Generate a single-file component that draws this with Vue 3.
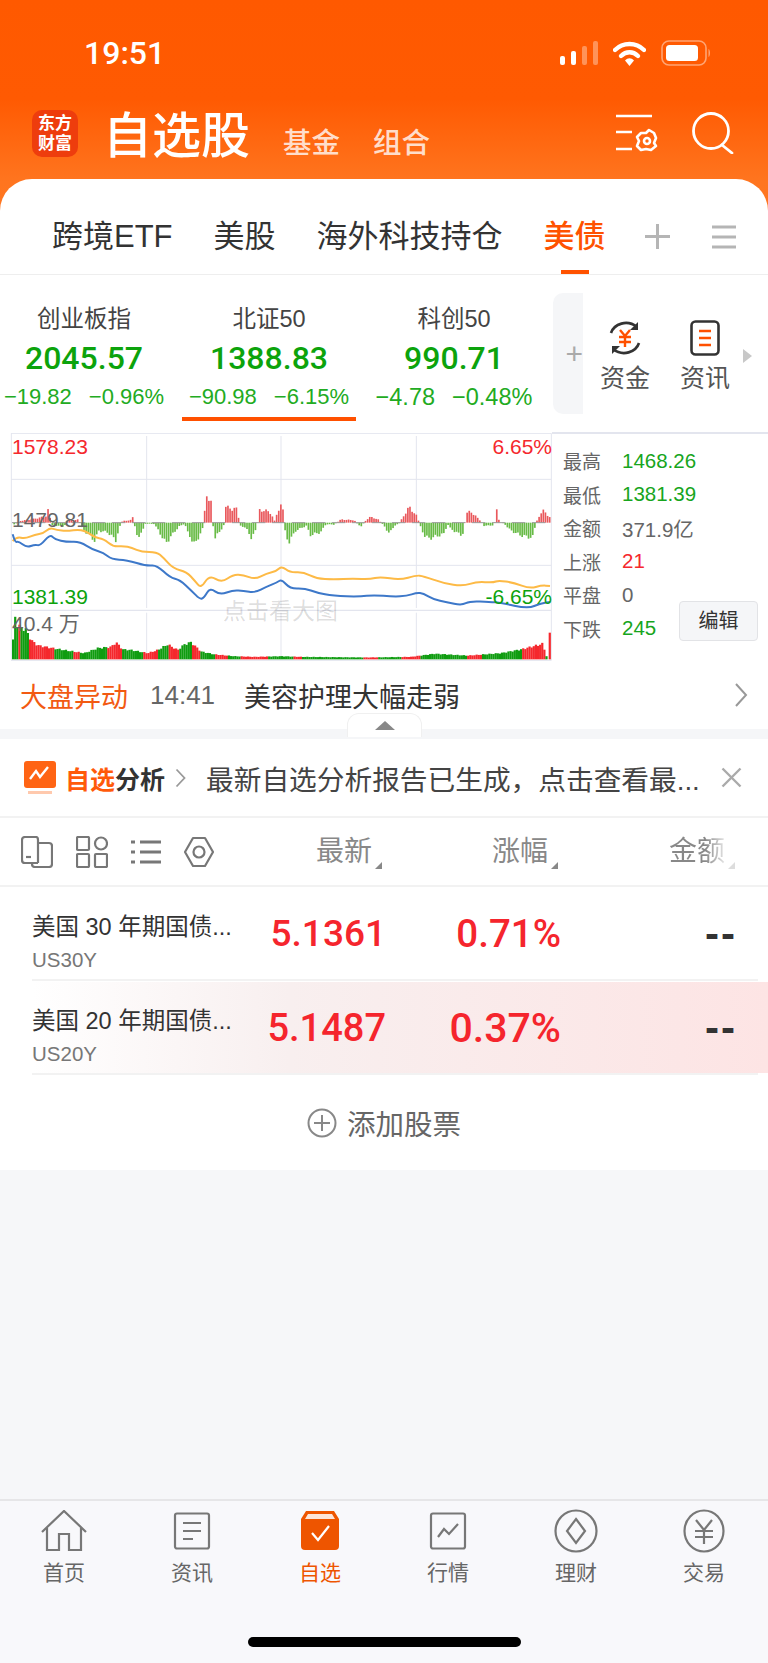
<script setup>
const tabs = ['跨境ETF', '美股', '海外科技持仓', '美债']

const indexes = [
  { name: '创业板指', value: '2045.57', diff: '−19.82', pct: '−0.96%' },
  { name: '北证50', value: '1388.83', diff: '−90.98', pct: '−6.15%', active: true },
  { name: '科创50', value: '990.71', diff: '−4.78', pct: '−0.48%' }
]

const stats = [
  { label: '最高', value: '1468.26', tone: 'green' },
  { label: '最低', value: '1381.39', tone: 'green' },
  { label: '金额', value: '371.9亿', tone: 'gray' },
  { label: '上涨', value: '21', tone: 'red' },
  { label: '平盘', value: '0', tone: 'gray' },
  { label: '下跌', value: '245', tone: 'green' }
]

const stocks = [
  { name: '美国 30 年期国债...', code: 'US30Y', price: '5.1361', pct: '0.71%' },
  { name: '美国 20 年期国债...', code: 'US20Y', price: '5.1487', pct: '0.37%', hot: true }
]

const navItems = [
  { key: 'home', label: '首页' },
  { key: 'news', label: '资讯' },
  { key: 'watch', label: '自选', active: true },
  { key: 'market', label: '行情' },
  { key: 'wealth', label: '理财' },
  { key: 'trade', label: '交易' }
]

// all chart numbers are in 3x units, the svg viewBox scales them back down
const yellow = [38,345,50,332,75,338,105,326,130,322,150,305,170,312,200,315,240,310,265,320,285,335,310,338,340,362,370,360,395,365,425,378,470,378,490,395,520,428,560,438,585,465,603,487,628,447,665,470,700,445,730,447,765,460,800,442,830,435,845,420,870,440,910,438,950,458,1000,460,1060,458,1110,460,1140,452,1200,462,1248,448,1270,450,1330,472,1390,480,1430,467,1480,470,1495,463,1540,470,1590,488,1625,478,1650,480]
const blue = [38,325,45,350,55,345,80,365,105,355,120,360,150,325,165,340,200,348,240,347,280,372,310,380,335,400,380,402,440,420,470,417,510,455,540,462,575,495,600,520,612,515,630,485,660,507,700,492,730,495,765,500,800,482,830,470,845,460,870,488,915,487,950,500,1000,510,1080,512,1120,507,1180,512,1220,510,1250,500,1270,502,1300,520,1340,528,1385,538,1410,525,1470,528,1500,530,1585,548,1620,532,1650,528]

// smooth through midpoints so the lines don't look jagged
const toPath = (arr) => {
  let d = 'M' + arr[0] + ' ' + arr[1]
  for (let i = 2; i < arr.length - 2; i += 2) {
    const mx = (arr[i] + arr[i + 2]) / 2
    const my = (arr[i + 1] + arr[i + 3]) / 2
    d += ' Q' + arr[i] + ' ' + arr[i + 1] + ' ' + mx + ' ' + my
  }
  return d + ' L' + arr[arr.length - 2] + ' ' + arr[arr.length - 1]
}
const yellowLine = toPath(yellow)
const blueLine = toPath(blue)

const lerp = (keys, x) => {
  for (let i = 0; i < keys.length - 2; i += 2) {
    if (x >= keys[i] && x <= keys[i + 2]) {
      const t = (x - keys[i]) / ((keys[i + 2] - keys[i]) || 1)
      return keys[i + 1] + (keys[i + 3] - keys[i + 1]) * t
    }
  }
  return 0
}

// signed height of the big order bars, + goes up
const flowKeys = [40,-6,60,6,100,12,135,20,145,48,150,-8,190,-12,200,8,235,10,240,-12,255,-30,285,-60,290,-25,320,-30,345,-55,360,-3,365,5,390,8,395,20,400,-5,410,-45,425,-30,432,-3,460,-4,470,-20,495,-65,520,-30,535,-12,552,-3,560,-30,582,-70,605,-20,610,-3,613,75,632,75,636,-3,642,-50,665,-15,672,-2,675,55,690,40,705,50,715,8,718,-10,735,-15,750,-48,765,-25,770,-3,773,40,806,36,822,4,828,30,845,60,850,-5,855,-45,865,-60,885,-25,920,-8,925,-40,960,-30,975,-5,1000,-6,1020,10,1060,8,1080,-15,1085,-5,1105,18,1130,12,1150,-10,1165,-35,1180,-10,1195,-3,1205,15,1225,50,1250,18,1255,-2,1270,-40,1285,-50,1330,-35,1340,-3,1345,-15,1365,-30,1385,-40,1392,-5,1395,30,1410,35,1440,5,1450,-10,1480,-8,1488,45,1495,3,1510,-3,1530,-25,1560,-40,1595,-48,1605,-3,1610,10,1625,40,1652,12]
const flowBars = []
for (let x = 40; x < 1652; x += 6.35) {
  const v = lerp(flowKeys, x) * (0.95 + 0.12 * Math.sin(x * 1.7))
  if (Math.abs(v) < 1) continue
  flowBars.push({ x, y: v > 0 ? 290 - v : 290, h: Math.abs(v), fill: v > 0 ? '#e9585c' : '#68bb46' })
}

const volKeys = [36,60,42,140,46,110,75,95,90,62,110,45,160,35,200,28,250,20,290,36,330,40,345,55,365,32,390,30,440,20,470,30,500,48,530,30,550,48,570,55,600,25,640,16,700,10,760,8,840,10,900,8,1100,6,1230,8,1300,18,1400,12,1500,20,1560,32,1625,50,1638,4,1652,4]
const redRanges = [[52,58],[82,160],[220,235],[320,365],[428,470],[505,535],[572,600],[640,680],[720,800],[880,900],[1090,1130],[1200,1260],[1400,1440],[1560,1632]]
const volBars = []
for (let x = 36; x < 1640; x += 6.35) {
  const h = lerp(volKeys, x) * (0.93 + 0.07 * Math.sin(x * 2.3))
  const up = redRanges.some(([a, b]) => x >= a && x <= b)
  volBars.push({ x, y: 700 - h, h, fill: up ? '#f5282d' : '#0f9c10' })
}
volBars.push({ x: 1646, y: 620, h: 80, fill: '#f5282d' })
</script>

<template>
  <div class="page">
    <div class="top">
      <div class="statusbar">
        <span class="time">19:51</span>
        <div class="status-icons">
          <svg width="38" height="24" viewBox="0 0 38 24">
            <rect x="0" y="15" width="5" height="9" rx="2" fill="#fff" />
            <rect x="11" y="10" width="5" height="14" rx="2" fill="#fff" />
            <rect x="22" y="5" width="5" height="19" rx="2" fill="#fff" opacity=".35" />
            <rect x="33" y="0" width="5" height="24" rx="2" fill="#fff" opacity=".35" />
          </svg>
          <svg width="33" height="25" viewBox="0 0 33 25">
            <path d="M2 9 C10 1 23 1 31 9" fill="none" stroke="#fff" stroke-width="4.4" stroke-linecap="round" />
            <path d="M8 15 C13 10 20 10 25 15" fill="none" stroke="#fff" stroke-width="4.4" stroke-linecap="round" />
            <path d="M12 19.5 C15 16.5 18 16.5 21 19.5 L16.5 25 Z" fill="#fff" />
          </svg>
          <svg width="50" height="26" viewBox="0 0 50 26">
            <rect x="1" y="1" width="44" height="24" rx="7" fill="none" stroke="#fff" stroke-opacity=".45" stroke-width="1.6" />
            <rect x="5" y="5" width="32" height="16" rx="3.5" fill="#fff" />
            <path d="M47.5 9 C49.5 10 49.5 16 47.5 17 Z" fill="#fff" opacity=".45" />
          </svg>
        </div>
      </div>

      <div class="titlebar">
        <div class="logo"><span>东方</span><span>财富</span></div>
        <span class="title">自选股</span>
        <span class="subtitle">基金</span>
        <span class="subtitle">组合</span>
        <div class="title-icons">
          <svg width="44" height="42" viewBox="0 0 44 42" fill="none" stroke="#fff" stroke-width="2.6">
            <path d="M1 4 H37 M1 20 H17 M1 37 H17" />
            <path d="M26 21 L31 21 L34 18 L39 21 L41 26 L39 31 L41 34 L36 38 L31 37 L26 38 L22 34 L24 29 L22 25 Z" stroke-linejoin="round" />
            <circle cx="32" cy="29" r="3" />
          </svg>
          <svg width="42" height="42" viewBox="0 0 42 42" fill="none" stroke="#fff" stroke-width="2.8">
            <circle cx="19" cy="19" r="17.5" />
            <path d="M30 33 L40 41" stroke-linecap="round" />
          </svg>
        </div>
      </div>

      <div class="tabs">
        <span v-for="(t, i) in tabs" :key="t" class="tab" :class="{ on: i === 3 }">{{ t }}</span>
        <svg class="tab-plus" width="27" height="27" viewBox="0 0 27 27">
          <path d="M13.5 1 V26 M1 13.5 H26" stroke="#b5b5b5" stroke-width="3" />
        </svg>
        <svg class="tab-menu" width="24" height="24" viewBox="0 0 24 24">
          <path d="M0 2 H24 M0 12 H24 M0 22 H24" stroke="#b5b5b5" stroke-width="3" />
        </svg>
      </div>
    </div>

    <div class="index-row">
      <div class="index-list">
        <div v-for="item in indexes" :key="item.name" class="index-card" :class="{ on: item.active }">
          <div class="index-name">{{ item.name }}</div>
          <div class="index-value">{{ item.value }}</div>
          <div class="index-change"><span>{{ item.diff }}</span><span>{{ item.pct }}</span></div>
        </div>
      </div>
      <div class="index-add">+</div>
      <div class="shortcut">
        <svg width="36" height="36" viewBox="0 0 36 36" fill="none">
          <path d="M4 13 C7 4 20 -1 30 7 M32 23 C29 32 16 37 6 29" stroke="#333" stroke-width="2.6" />
          <path d="M31 2 V10 H23 M5 34 V26 H13" fill="#333" stroke="none" />
          <path d="M13 10 L18 16 L23 10 M12 17 H24 M12 22 H24 M18 16 V27" stroke="#ff5000" stroke-width="2.4" />
        </svg>
        <span>资金</span>
      </div>
      <div class="shortcut">
        <svg width="30" height="36" viewBox="0 0 30 36" fill="none">
          <rect x="1.5" y="1.5" width="27" height="33" rx="4" stroke="#333" stroke-width="2.6" />
          <path d="M9 11 H21 M9 18 H21 M9 25 H21" stroke="#ff5000" stroke-width="2.6" />
        </svg>
        <span>资讯</span>
      </div>
      <div class="more-arrow"></div>
    </div>

    <div class="chart-row">
      <div class="chart">
        <svg class="chart-svg" width="542" height="228" viewBox="30 21 1626 684">
          <g stroke="#e3e5ee" stroke-width="3" fill="none">
            <path d="M33 22 H1654 M33 160 H1654 M33 418 H1654 M33 703 H1654" />
            <path d="M33 553 H1654" stroke-width="4" />
            <path d="M34 22 V703 M1654 22 V703" />
            <path d="M440 30 V546 M440 560 V700 M843 30 V546 M843 560 V700 M1249 30 V546 M1249 560 V700" />
          </g>
          <rect v-for="(b, i) in flowBars" :key="'f' + i" :x="b.x" :y="b.y" width="5" :height="b.h" :fill="b.fill" />
          <path d="M36 290 H1654" stroke="#9a9a9a" stroke-width="3" stroke-dasharray="40 20" />
          <path :d="yellowLine" fill="none" stroke="#fdba46" stroke-width="6" stroke-linejoin="round" />
          <path :d="blueLine" fill="none" stroke="#3d78c9" stroke-width="6" stroke-linejoin="round" />
          <rect v-for="(b, i) in volBars" :key="'v' + i" :x="b.x" :y="b.y" width="6.6" :height="b.h" :fill="b.fill" />
        </svg>
        <span class="chart-label high">1578.23</span>
        <span class="chart-label high-pct">6.65%</span>
        <span class="chart-label mid">1479.81</span>
        <span class="chart-label low">1381.39</span>
        <span class="chart-label low-pct">-6.65%</span>
        <span class="chart-label vol">40.4 万</span>
        <span class="chart-hint">点击看大图</span>
      </div>
      <div class="stats">
        <div v-for="s in stats" :key="s.label" class="stat">
          <span class="stat-label">{{ s.label }}</span>
          <span class="stat-value" :class="s.tone">{{ s.value }}</span>
        </div>
        <div class="edit-btn">编辑</div>
      </div>
    </div>

    <div class="alert-row">
      <span class="alert-tag">大盘异动</span>
      <span class="alert-time">14:41</span>
      <span class="alert-text">美容护理大幅走弱</span>
      <svg class="alert-arrow" width="14" height="26" viewBox="0 0 14 26">
        <path d="M2 2 L12 13 L2 24" fill="none" stroke="#999" stroke-width="2" />
      </svg>
    </div>

    <div class="band">
      <div class="collapse"><i></i></div>
    </div>

    <div class="analysis">
      <svg width="32" height="34" viewBox="0 0 32 34">
        <rect x="0" y="0" width="32" height="27" rx="3" fill="#ff6414" />
        <path d="M6 18 L12 10 L16 16 L24 6" fill="none" stroke="#fff" stroke-width="2.4" />
        <rect x="4" y="30" width="24" height="3" fill="#ffc9ad" />
      </svg>
      <span class="analysis-name"><em>自选</em>分析</span>
      <svg width="11" height="20" viewBox="0 0 11 20">
        <path d="M1.5 1.5 L9.5 10 L1.5 18.5" fill="none" stroke="#999" stroke-width="1.8" />
      </svg>
      <span class="analysis-text">最新自选分析报告已生成，点击查看最...</span>
      <svg class="analysis-close" width="21" height="21" viewBox="0 0 21 21">
        <path d="M1.5 1.5 L19.5 19.5 M19.5 1.5 L1.5 19.5" stroke="#aaa" stroke-width="2.4" />
      </svg>
    </div>

    <div class="sortbar">
      <div class="sort-icons">
        <svg width="32" height="32" viewBox="0 0 32 32" fill="none" stroke="#777" stroke-width="2.2">
          <path d="M17 27 H4 Q1 27 1 24 V4 Q1 1 4 1 H15 Q17 1 17 4 V27" />
          <path d="M17 7 H28 Q31 7 31 10 V28 Q31 31 28 31 H14 Q11 31 11 28 V27" />
          <path d="M5 21 H10" />
        </svg>
        <svg width="32" height="32" viewBox="0 0 32 32" fill="none" stroke="#777" stroke-width="2.2">
          <rect x="1" y="1" width="12" height="13" rx="1" />
          <rect x="1" y="18" width="12" height="13" rx="1" />
          <circle cx="25" cy="7.5" r="6" />
          <rect x="19" y="18" width="12" height="13" rx="1" />
        </svg>
        <svg width="30" height="32" viewBox="0 0 30 32" fill="none" stroke="#777" stroke-width="3">
          <path d="M0 6 H4 M9 6 H30 M0 16 H4 M9 16 H30 M0 26 H4 M9 26 H30" />
        </svg>
        <svg width="30" height="32" viewBox="0 0 30 32" fill="none" stroke="#777" stroke-width="2.2">
          <path d="M9 2 H21 L29 16 L21 30 H9 L1 16 Z" stroke-linejoin="round" />
          <circle cx="15" cy="16" r="5.5" />
        </svg>
      </div>
      <div class="sort-head col-price">最新<i></i></div>
      <div class="sort-head col-pct">涨幅<i></i></div>
      <div class="sort-head col-amt"><span>金额</span><i></i></div>
    </div>

    <div class="stock-list">
      <div v-for="s in stocks" :key="s.code" class="stock" :class="{ hot: s.hot }">
        <div class="stock-info">
          <div class="stock-name">{{ s.name }}</div>
          <div class="stock-code">{{ s.code }}</div>
        </div>
        <div class="stock-price">{{ s.price }}</div>
        <div class="stock-pct">{{ s.pct }}</div>
        <div class="stock-amt">--</div>
      </div>
      <div class="add-stock">
        <svg width="30" height="30" viewBox="0 0 30 30" fill="none" stroke="#888" stroke-width="2">
          <circle cx="15" cy="15" r="13.5" />
          <path d="M15 7 V23 M7 15 H23" />
        </svg>
        <span>添加股票</span>
      </div>
    </div>

    <div class="spacer"></div>

    <div class="navbar">
      <div class="nav-items">
        <div v-for="n in navItems" :key="n.key" class="nav-item" :class="{ on: n.active }">
          <div class="nav-icon">
            <svg v-if="n.key === 'home'" width="46" height="42" viewBox="0 0 46 42" fill="none" stroke="#777" stroke-width="2.2">
              <path d="M1 22 L23 1 L45 22" />
              <path d="M6 18 V40 H18 V24 H28 V40 H40 V18" />
            </svg>
            <svg v-else-if="n.key === 'news'" width="38" height="38" viewBox="0 0 38 38" fill="none" stroke="#777" stroke-width="2.2">
              <rect x="2" y="1.5" width="34" height="35" rx="2" />
              <path d="M10 11 H28 M10 19 H28 M10 27 H20" />
            </svg>
            <svg v-else-if="n.key === 'watch'" width="38" height="40" viewBox="0 0 38 40">
              <path d="M5 0 H33 L38 8 V35 Q38 39 34 39 H4 Q0 39 0 35 V8 Z" fill="#ee5500" />
              <path d="M4 8 L7 3 H31 L34 8 Z" fill="#fff" opacity=".85" />
              <path d="M11 22 L17 29 L28 15" fill="none" stroke="#fff" stroke-width="2.2" />
            </svg>
            <svg v-else-if="n.key === 'market'" width="38" height="38" viewBox="0 0 38 38" fill="none" stroke="#777" stroke-width="2.2">
              <rect x="2" y="1.5" width="34" height="35" rx="2" />
              <path d="M9 25 L15 17 L20 22 L29 12" />
            </svg>
            <svg v-else-if="n.key === 'wealth'" width="44" height="44" viewBox="0 0 44 44" fill="none" stroke="#777" stroke-width="2.2">
              <circle cx="22" cy="22" r="20.5" />
              <path d="M22 10 L31 22 L22 34 L13 22 Z" />
            </svg>
            <svg v-else width="42" height="44" viewBox="0 0 42 44" fill="none" stroke="#777" stroke-width="2.2">
              <ellipse cx="21" cy="22" rx="19.5" ry="20.5" />
              <path d="M13 11 L21 21 L29 11 M12 22 H30 M12 28 H30 M21 21 V35" />
            </svg>
          </div>
          <span class="nav-label">{{ n.label }}</span>
        </div>
      </div>
      <div class="home-bar"></div>
    </div>
  </div>
</template>

<style scoped>
.page {
  width: 768px;
  height: 1663px;
  display: flex;
  flex-direction: column;
  background: #f6f7f9;
  overflow: hidden;
  font-family: "Liberation Sans", "Noto Sans CJK SC", sans-serif;
  color: #333;
}

.top {
  background: linear-gradient(180deg, #ff5900 0%, #ff5a02 36%, #ff751f 66%, #ff7a25 100%);
}

.statusbar {
  height: 100px;
  padding: 6px 57px 0 84px;
  box-sizing: border-box;
  display: flex;
  align-items: center;
  justify-content: space-between;
}

.time {
  color: #fff;
  font-family: Roboto, sans-serif;
  font-size: 32px;
  font-weight: 500;
}

.status-icons {
  display: flex;
  align-items: center;
  gap: 15px;
}

.titlebar {
  height: 79px;
  padding: 0 34px 0 32px;
  display: flex;
  align-items: flex-start;
  color: #fff;
}

.logo {
  width: 46px;
  height: 47px;
  margin-top: 10px;
  border-radius: 10px;
  background: #ee3d0d;
  display: flex;
  flex-direction: column;
  align-items: center;
  justify-content: center;
  font-size: 17px;
  line-height: 20px;
  font-weight: 700;
}

.title {
  margin-left: 25px;
  padding-top: 2px;
  font-size: 49px;
  line-height: 68px;
  font-weight: 500;
}

.subtitle {
  margin-left: 33px;
  margin-top: 21px;
  font-size: 28.5px;
  line-height: 44px;
  font-weight: 500;
  color: rgba(255, 255, 255, 0.8);
}

.title-icons {
  margin-left: auto;
  margin-top: 12px;
  display: flex;
  align-items: flex-start;
  gap: 33px;
}

.tabs {
  height: 96px;
  padding: 20px 38px 0 52px;
  box-sizing: border-box;
  display: flex;
  align-items: center;
  background: #fff;
  border-radius: 32px 32px 0 0;
  border-bottom: 1px solid #eee;
  gap: 41px;
}

.tab {
  position: relative;
  flex-shrink: 0;
  white-space: nowrap;
  font-size: 31px;
  line-height: 75px;
  color: #333;
}

.tab.on {
  color: #ff5200;
  font-weight: 500;
}

.tab.on::after {
  content: "";
  position: absolute;
  left: 17px;
  right: 17px;
  bottom: 0;
  height: 4px;
  background: #ff5200;
}

.tab-plus {
  margin-left: -3px;
  flex-shrink: 0;
}

.tab-menu {
  margin-left: auto;
  flex-shrink: 0;
}

.index-row {
  height: 158px;
  display: flex;
  align-items: flex-start;
  background: #fff;
}

.index-list {
  width: 553px;
  flex-shrink: 0;
  display: flex;
  padding-left: 1px;
  box-sizing: border-box;
}

.index-card {
  height: 146px;
  padding-top: 27px;
  box-sizing: border-box;
  text-align: center;
}

.index-card:nth-child(1) {
  width: 166px;
}

.index-card:nth-child(2) {
  width: 174px;
  margin-left: 15px;
}

.index-card:nth-child(3) {
  width: 166px;
  margin-left: 15px;
}

.index-card:nth-child(3) .index-change {
  font-size: 23.5px;
}

.index-card.on {
  border-bottom: 4px solid #ff5000;
}

.index-name {
  font-size: 23.5px;
  line-height: 34px;
  color: #444;
}

.index-value {
  margin-top: 2px;
  font-family: Roboto, sans-serif;
  font-size: 32px;
  line-height: 40px;
  font-weight: 500;
  color: #0ca30c;
}

.index-change {
  margin-top: 1px;
  display: flex;
  justify-content: center;
  gap: 17px;
  white-space: nowrap;
  font-size: 22px;
  line-height: 36px;
  color: #22ab22;
}

.index-add {
  width: 30px;
  height: 121px;
  margin-top: 18px;
  border-radius: 10px 0 0 10px;
  background: #f5f6f8;
  color: #aaa;
  font-size: 30px;
  line-height: 121px;
  text-align: right;
}

.shortcut {
  width: 84px;
  margin-top: 45px;
  display: flex;
  flex-direction: column;
  align-items: center;
  gap: 3px;
  font-size: 25px;
  line-height: 38px;
  color: #555;
}

.shortcut + .shortcut {
  width: 76px;
}

.more-arrow {
  margin: 74px 0 0 0;
  width: 0;
  height: 0;
  border-left: 9px solid #c8c8c8;
  border-top: 7px solid transparent;
  border-bottom: 7px solid transparent;
}

.chart-row {
  height: 228px;
  display: flex;
  background: #fff;
}

.chart {
  position: relative;
  width: 552px;
  height: 228px;
  flex-shrink: 0;
}

.chart-svg {
  position: absolute;
  left: 10px;
  top: 0;
}

.chart-label {
  position: absolute;
  font-size: 21px;
  line-height: 24px;
  white-space: nowrap;
}

.high {
  left: 12px;
  top: 2px;
  color: #f5282d;
}

.high-pct {
  right: 0;
  top: 2px;
  color: #f5282d;
}

.mid {
  left: 12px;
  top: 75px;
  color: #666;
}

.low {
  left: 12px;
  top: 152px;
  color: #0ca30c;
}

.low-pct {
  right: 0;
  top: 152px;
  color: #0ca30c;
}

.vol {
  left: 12px;
  top: 179px;
  color: #666;
}

.chart-hint {
  position: absolute;
  left: 223px;
  top: 163px;
  font-size: 23px;
  line-height: 30px;
  color: rgba(0, 0, 0, 0.14);
}

.stats {
  position: relative;
  flex: 1;
  padding: 10px 0 0 11px;
  border-top: 2px solid #e3e5ee;
  margin-top: -1px;
  height: 228px;
  box-sizing: border-box;
}

.stat {
  display: flex;
  align-items: center;
  height: 33.5px;
}

.stat-label {
  width: 59px;
  font-size: 19px;
  color: #666;
}

.stat-value {
  font-size: 20.5px;
}

.green {
  color: #17a51d;
}

.red {
  color: #f5282d;
}

.gray {
  color: #666;
}

.edit-btn {
  position: absolute;
  right: 10px;
  top: 167px;
  width: 79px;
  height: 40px;
  box-sizing: border-box;
  border: 1px solid #e2e3e6;
  border-radius: 4px;
  background: #f5f6f8;
  font-size: 20px;
  line-height: 38px;
  text-align: center;
  color: #333;
}

.alert-row {
  height: 68px;
  padding: 0 20px;
  display: flex;
  align-items: center;
  background: #fff;
}

.alert-tag {
  font-size: 27px;
  color: #f25a12;
}

.alert-time {
  margin-left: 22px;
  font-size: 26px;
  color: #666;
}

.alert-text {
  margin-left: 29px;
  font-size: 27px;
  color: #333;
}

.alert-arrow {
  margin-left: auto;
}

.band {
  position: relative;
  height: 10px;
  background: #f5f6f8;
}

.collapse {
  position: absolute;
  left: 347px;
  top: -16px;
  width: 75px;
  height: 24px;
  box-sizing: border-box;
  background: #fff;
  border: 1px solid #f0f0f0;
  border-bottom: none;
  border-radius: 12px 12px 0 0;
  display: flex;
  justify-content: center;
  padding-top: 7px;
}

.collapse i {
  width: 0;
  height: 0;
  border-left: 10px solid transparent;
  border-right: 10px solid transparent;
  border-bottom: 9px solid #888;
}

.analysis {
  height: 79px;
  padding: 0 26px 0 24px;
  box-sizing: border-box;
  display: flex;
  align-items: center;
  background: #fff;
  border-bottom: 2px solid #f2f2f2;
}

.analysis-name {
  margin: 0 10px 0 9px;
  font-size: 25px;
  font-weight: 700;
  color: #333;
}

.analysis-name em {
  font-style: normal;
  color: #ff5a0a;
}

.analysis-text {
  margin-left: 20px;
  font-size: 27.7px;
  white-space: nowrap;
  color: #444;
}

.analysis-close {
  margin-left: auto;
  flex-shrink: 0;
}

.sortbar {
  position: relative;
  height: 69px;
  box-sizing: border-box;
  padding-left: 21px;
  display: flex;
  align-items: center;
  background: #fff;
  border-bottom: 2px solid #f2f2f2;
}

.sort-icons {
  display: flex;
  align-items: center;
  gap: 23px;
}

.sort-head {
  position: absolute;
  top: 14px;
  font-size: 28px;
  line-height: 40px;
  color: #888;
  white-space: nowrap;
}

.sort-head i {
  position: absolute;
  right: -10px;
  bottom: 3px;
  width: 0;
  height: 0;
  border-left: 7px solid transparent;
  border-bottom: 7px solid #888;
}

.col-price {
  left: 316px;
}

.col-pct {
  left: 492px;
}

.col-amt {
  left: 669px;
}

.col-amt span {
  background: linear-gradient(90deg, #888 65%, #e6e6e6 100%);
  -webkit-background-clip: text;
  background-clip: text;
  color: transparent;
}

.col-amt i {
  border-bottom-color: #ddd;
}

.stock-list {
  background: #fff;
  padding-top: 1px;
}

.stock {
  height: 91px;
  margin: 0 0 0 32px;
  display: flex;
  align-items: center;
  box-sizing: border-box;
  position: relative;
  padding-right: 31px;
}

.stock::after {
  content: "";
  position: absolute;
  left: 0;
  right: 10px;
  bottom: -2px;
  height: 2px;
  background: #f2f2f2;
}

.stock + .stock {
  margin-top: 3px;
}

.stock.hot {
  background: linear-gradient(90deg, rgba(250, 240, 240, 0) 0%, #f8efef 35%, #fde4e4 100%);
}

.stock-info {
  width: 210px;
  flex-shrink: 0;
  padding-top: 16px;
}

.stock-name {
  font-size: 23.5px;
  line-height: 34px;
  white-space: nowrap;
  color: #333;
}

.stock-code {
  margin-top: 2px;
  font-size: 20.5px;
  line-height: 28px;
  color: #777;
}

.stock-price {
  width: 144px;
  text-align: right;
  font-family: Roboto, sans-serif;
  font-size: 37px;
  font-weight: 500;
  color: #f5252d;
}

.stock-pct {
  width: 175px;
  text-align: right;
  font-family: Roboto, sans-serif;
  font-size: 38.5px;
  font-weight: 500;
  color: #f5252d;
}

.stock.hot .stock-price {
  font-size: 38px;
}

.stock.hot .stock-pct {
  font-size: 41px;
}

.stock-amt {
  margin-left: auto;
  font-size: 42px;
  font-weight: 700;
  letter-spacing: 2px;
  color: #333;
}

.add-stock {
  height: 95px;
  margin-top: 2px;
  display: flex;
  align-items: center;
  justify-content: center;
  gap: 10px;
  font-size: 28.5px;
  color: #666;
}

.spacer {
  flex: 1;
}

.navbar {
  height: 164px;
  box-sizing: border-box;
  background: #f8f8fb;
  border-top: 2px solid #e6e6e8;
  position: relative;
}

.nav-items {
  display: grid;
  grid-template-columns: repeat(6, 1fr);
}

.nav-item {
  display: flex;
  flex-direction: column;
  align-items: center;
  padding-top: 8px;
  color: #666;
}

.nav-item.on {
  color: #ee5500;
}

.nav-icon {
  height: 44px;
  display: flex;
  align-items: center;
  justify-content: center;
}

.nav-label {
  margin-top: 5px;
  font-size: 21px;
  line-height: 30px;
}

.home-bar {
  position: absolute;
  left: 248px;
  top: 136px;
  width: 273px;
  height: 10px;
  border-radius: 5px;
  background: #000;
}
</style>

<style>
html, body {
  margin: 0;
  background: #f6f7f9;
}
</style>
